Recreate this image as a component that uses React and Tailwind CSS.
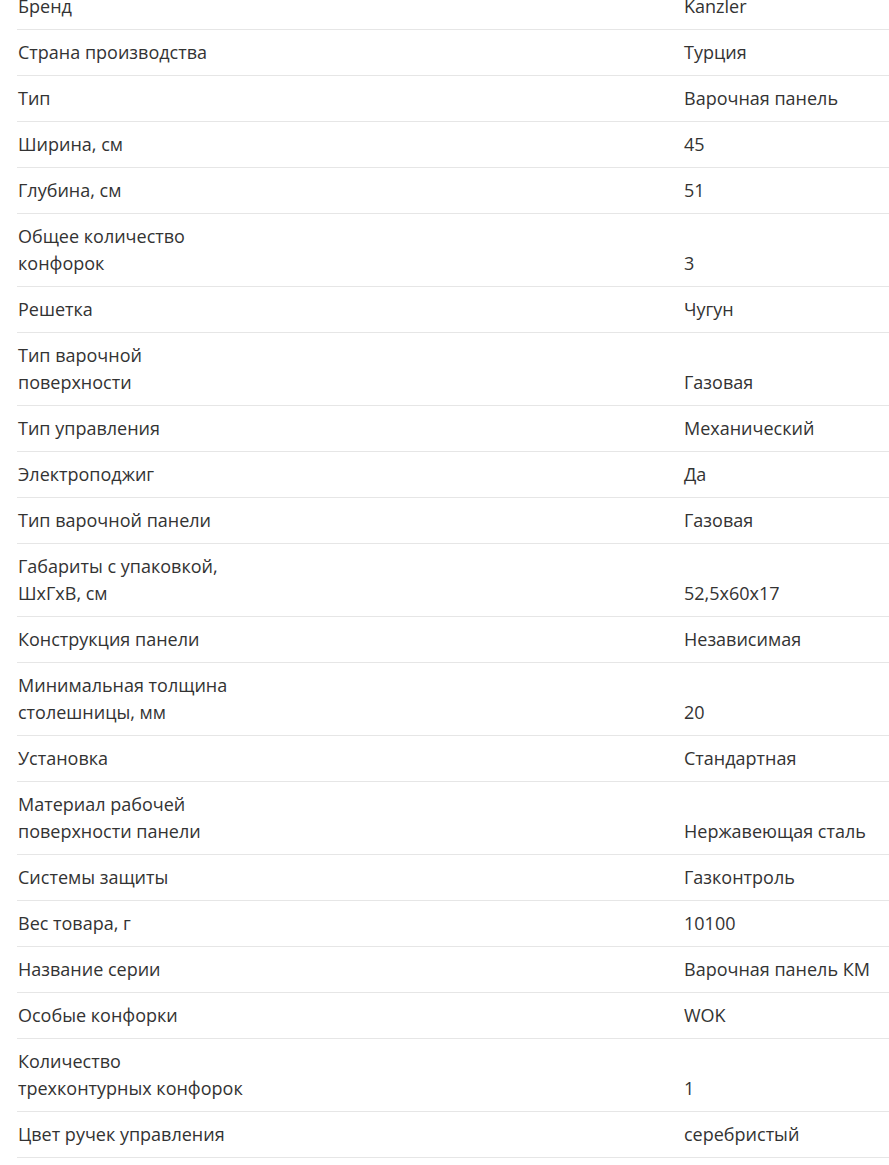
import React from "react";

const specs = [
  ["Бренд", "Kanzler"],
  ["Страна производства", "Турция"],
  ["Тип", "Варочная панель"],
  ["Ширина, см", "45"],
  ["Глубина, см", "51"],
  ["Общее количество конфорок", "3"],
  ["Решетка", "Чугун"],
  ["Тип варочной поверхности", "Газовая"],
  ["Тип управления", "Механический"],
  ["Электроподжиг", "Да"],
  ["Тип варочной панели", "Газовая"],
  ["Габариты с упаковкой, ШхГхВ, см", "52,5x60x17"],
  ["Конструкция панели", "Независимая"],
  ["Минимальная толщина столешницы, мм", "20"],
  ["Установка", "Стандартная"],
  ["Материал рабочей поверхности панели", "Нержавеющая сталь"],
  ["Системы защиты", "Газконтроль"],
  ["Вес товара, г", "10100"],
  ["Название серии", "Варочная панель КМ"],
  ["Особые конфорки", "WOK"],
  ["Количество трехконтурных конфорок", "1"],
  ["Цвет ручек управления", "серебристый"],
];

export default function App() {
  return (
    <div
      className="min-h-screen bg-white overflow-hidden"
      style={{ fontFamily: '"Open Sans", "Liberation Sans", sans-serif' }}
    >
      <div className="ml-[17px] -mt-[16px] text-[18px] leading-[27px] text-[#333333]">
        {specs.map(([label, value]) => (
          <div
            key={label}
            className="grid grid-cols-[667px_1fr] items-end border-b border-[#e6e6e6] py-[9px]"
          >
            <div className="pl-px max-w-[234px]">{label}</div>
            <div>{value}</div>
          </div>
        ))}
      </div>
    </div>
  );
}
